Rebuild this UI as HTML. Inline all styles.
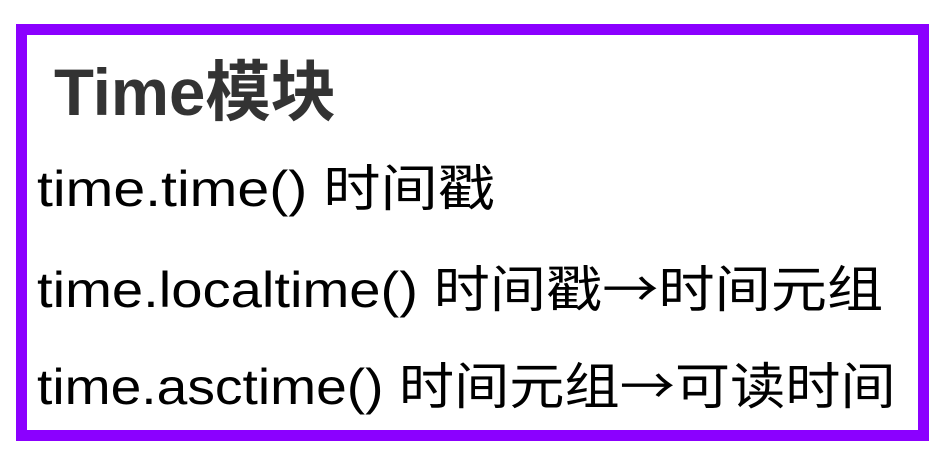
<!DOCTYPE html>
<html><head><meta charset="utf-8"><style>
html,body{margin:0;padding:0;background:#fff;width:946px;height:450px;overflow:hidden}
.box{position:absolute;left:16px;top:24px;width:891px;height:395px;border:11px solid #8b00ff;}
.t{position:absolute;white-space:nowrap;font-family:"Liberation Sans","Noto Sans CJK SC",sans-serif;color:#000;transform-origin:0 0}
.h{left:54px;top:52px;font-size:66px;font-weight:bold;color:#333;line-height:80px;transform:scaleX(0.99)}
.l{left:37px;font-size:50px;line-height:60px}
.a{font-family:"Noto Sans CJK SC",sans-serif}
</style></head><body>
<div class="box"></div>
<div class="t h">Time模块</div>
<div class="t l" style="top:159px;transform:scaleX(1.145)">time.time() 时间戳</div>
<div class="t l" style="top:256px;transform:scaleX(1.124)">time.localtime() 时间戳<span class="a">→</span>时间元组</div>
<div class="t l" style="top:353px;transform:scaleX(1.104)">time.asctime() 时间元组<span class="a">→</span>可读时间</div>
</body></html>
